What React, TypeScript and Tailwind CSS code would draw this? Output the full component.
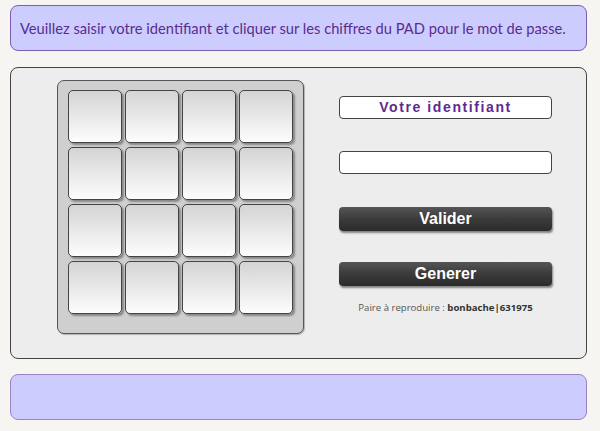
import React from 'react';

const keys = Array.from({ length: 16 }, (_, i) => i);

const Pad: React.FC = () => (
  <div className="w-[247px] h-[254px] shrink-0 rounded-[7px] border border-[#555] bg-[#cfcfcf] pl-[10px] pt-[9px] shadow-[1px_1px_1px_rgba(0,0,0,0.25)]">
    <div className="grid grid-cols-[repeat(4,54px)] grid-rows-[repeat(4,53px)] gap-x-[3px] gap-y-[4px]">
      {keys.map((k) => (
        <div
          key={k}
          className="rounded-[5px] border border-[#444] bg-gradient-to-b from-[#d4d4d4] to-[#fdfdfd] shadow-[2px_2px_2px_rgba(0,0,0,0.35)]"
        />
      ))}
    </div>
  </div>
);

const DarkButton: React.FC<{ label: string }> = ({ label }) => (
  <button className="h-[24px] w-full rounded-[4px] bg-gradient-to-b from-[#555] via-[#3b3b3b] to-[#2b2b2b] text-white text-[16px] font-bold leading-none font-['Liberation_Sans',Arial,sans-serif] shadow-[1px_2px_2px_rgba(0,0,0,0.45)] flex items-center justify-center pb-[1px]">
    {label}
  </button>
);

export default function App() {
  return (
    <div className="w-[600px] h-[431px] bg-[#f6f5f2] pl-[10px] pt-[5px] font-['Liberation_Sans',Arial,sans-serif]">
      {/* message haut */}
      <div className="w-[577px] h-[46px] rounded-[8px] border border-[#7b5fae] bg-[#ccccff] flex items-center pl-[9px]">
        <p className="whitespace-nowrap text-[#5a2c8e] text-[14.7px] font-['Lato',sans-serif]">
          Veuillez saisir votre identifiant et cliquer sur les chiffres du PAD pour le mot de passe.
        </p>
      </div>

      {/* zone principale */}
      <div className="mt-[16px] w-[577px] h-[292px] rounded-[8px] border border-[#444] bg-[#eeeded] flex pl-[46px] pt-[12px]">
        <Pad />

        <div className="ml-[35px] mt-[16px] w-[213px] flex flex-col">
          <div className="h-[23px] rounded-[4px] border border-[#444] bg-white flex items-center justify-center">
            <span className="text-[#5e2a8f] text-[14px] font-bold tracking-[1.6px]">Votre identifiant</span>
          </div>
          <div className="mt-[32px] h-[23px] rounded-[4px] border border-[#444] bg-white" />
          <div className="mt-[33px]">
            <DarkButton label="Valider" />
          </div>
          <div className="mt-[31px]">
            <DarkButton label="Generer" />
          </div>
          <p className="mt-[15px] text-center text-[9.6px] text-[#555] font-['Open_Sans',sans-serif]">
            Paire à reproduire : <span className="font-bold text-[#333]">bonbache|631975</span>
          </p>
        </div>
      </div>

      {/* message bas */}
      <div className="mt-[15px] w-[577px] h-[46px] rounded-[8px] border border-[#9c84c4] bg-[#ccccff]" />
    </div>
  );
}
